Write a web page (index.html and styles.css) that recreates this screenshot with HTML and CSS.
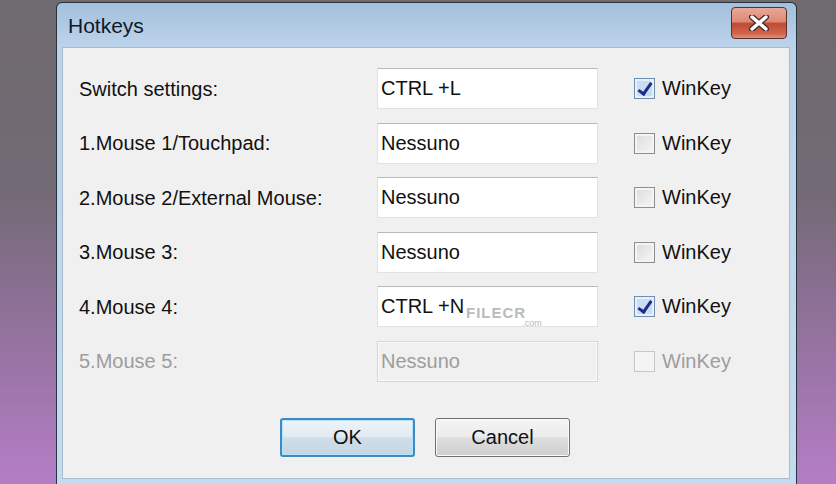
FILE: index.html
```html
<!DOCTYPE html>
<html lang="it">

<head>
    <meta charset="UTF-8">
    <title>Hotkeys</title>
    <link rel="stylesheet" href="styles.css">
</head>

<body>
    <div class="window">
        <div class="titlebar">
            <span class="title">Hotkeys</span>
            <div class="close">
                <svg width="24" height="16" viewBox="0 0 24 16">
                    <path d="M5 2 L19 14 M19 2 L5 14" stroke="#4a2a28" stroke-width="6" stroke-linecap="round"/>
                    <path d="M5 2 L19 14 M19 2 L5 14" stroke="#ffffff" stroke-width="3.4" stroke-linecap="round"/>
                </svg>
            </div>
        </div>
        <div class="content">
            <div class="rows">
                <div class="row">
                    <span class="label">Switch settings:</span>
                    <div class="field">CTRL +L</div>
                    <label class="check"><span class="box checked"></span>WinKey</label>
                </div>
                <div class="row">
                    <span class="label">1.Mouse 1/Touchpad:</span>
                    <div class="field">Nessuno</div>
                    <label class="check"><span class="box"></span>WinKey</label>
                </div>
                <div class="row">
                    <span class="label">2.Mouse 2/External Mouse:</span>
                    <div class="field">Nessuno</div>
                    <label class="check"><span class="box"></span>WinKey</label>
                </div>
                <div class="row">
                    <span class="label">3.Mouse 3:</span>
                    <div class="field">Nessuno</div>
                    <label class="check"><span class="box"></span>WinKey</label>
                </div>
                <div class="row">
                    <span class="label">4.Mouse 4:</span>
                    <div class="field">CTRL +N
                        <span class="mark">FILECR<small>.com</small></span>
                    </div>
                    <label class="check"><span class="box checked"></span>WinKey</label>
                </div>
                <div class="row disabled">
                    <span class="label">5.Mouse 5:</span>
                    <div class="field">Nessuno</div>
                    <label class="check"><span class="box"></span>WinKey</label>
                </div>
            </div>
            <div class="buttons">
                <button class="btn default">OK</button>
                <button class="btn">Cancel</button>
            </div>
        </div>
    </div>
</body>
</html>
```

FILE: styles.css
```css
body {
    margin: 0;
    height: 484px;
    overflow: hidden;
    font-family: "Liberation Sans", Arial, sans-serif;
    background: linear-gradient(to bottom, #6f6a6f 0%, #736a75 40%, #9a74a6 75%, #b47ec6 100%);
}

.window {
    margin: 2px 0 0 56px;
    width: 741px;
    height: 484px;
    box-sizing: border-box;
    border: 1px solid #26323c;
    border-bottom: none;
    border-radius: 6px 6px 0 0;
    background: linear-gradient(to bottom, #a4c0dc 0px, #bcd3ea 44px, #c4dbef 100%);
    padding: 0 6px 0 5px;
    display: flex;
    flex-direction: column;
}

.titlebar {
    height: 44px;
    display: flex;
    align-items: center;
    justify-content: space-between;
    flex-shrink: 0;
}

.title {
    font-size: 21px;
    color: #111827;
    padding-left: 6px;
    margin-top: 2px;
}

.close {
    width: 56px;
    height: 32px;
    margin-right: 3px;
    margin-top: -5px;
    box-sizing: border-box;
    border: 1px solid #5a2f2c;
    border-radius: 4px;
    background: linear-gradient(to bottom, #e9a898 0%, #dc8a76 45%, #c24a32 52%, #d0654c 85%, #e0907c 100%);
    display: flex;
    align-items: center;
    justify-content: center;
}

.content {
    flex: 1;
    margin-bottom: 7px;
    background: #f0f0f0;
    border: 1px solid #a7bccf;
    display: flex;
    flex-direction: column;
    padding: 20px 0 0 16px;
}

.rows {
    display: flex;
    flex-direction: column;
    gap: 13.6px;
}

.row {
    display: flex;
    align-items: center;
    height: 41px;
    font-size: 20px;
    color: #111;
}

.label {
    width: 298px;
    margin-top: 1px;
}

.field {
    position: relative;
    width: 221px;
    height: 41px;
    box-sizing: border-box;
    background: #fff;
    border: 1px solid #e2e2e2;
    border-top-color: #b9b9b9;
    padding: 8px 0 0 3px;
}

.row.disabled {
    color: #9d9d9d;
}

.row.disabled .field {
    background: #f0f0f0;
    border-color: #d6d6d6;
    box-shadow: inset 0 0 0 1px #fbfbfb;
}

.mark {
    position: absolute;
    left: 88px;
    top: 17px;
    font-size: 15px;
    font-weight: bold;
    color: #b9bbbd;
    letter-spacing: 1px;
}

.mark small {
    font-size: 9px;
    font-weight: normal;
    letter-spacing: 0;
    margin-left: -4px;
    vertical-align: -8px;
}

.check {
    display: flex;
    align-items: center;
    margin-left: 36px;
    gap: 7px;
}

.box {
    width: 21px;
    height: 21px;
    box-sizing: border-box;
    border: 1px solid #8f8f8f;
    background: linear-gradient(135deg, #dcdcdc, #f6f6f6);
    box-shadow: inset 0 0 0 2px #f4f4f4;
}

.box.checked {
    border-color: #6f8fae;
    background: #c9def3;
    box-shadow: inset 0 0 0 2px #e8f1fa;
    position: relative;
}

.box.checked::after {
    content: "";
    position: absolute;
    left: 6px;
    top: 1px;
    width: 5px;
    height: 12px;
    border: solid #1f2a8a;
    border-width: 0 3px 3px 0;
    transform: rotate(35deg);
}

.row.disabled .box {
    border-color: #c7c7c7;
    background: #f4f4f4;
}

.buttons {
    display: flex;
    justify-content: center;
    gap: 20px;
    margin-top: 36px;
    padding-right: 18px;
}

.btn {
    width: 135px;
    height: 39px;
    font-family: "Liberation Sans", Arial, sans-serif;
    font-size: 20px;
    color: #111;
    border: 1px solid #707070;
    border-radius: 3px;
    background: linear-gradient(to bottom, #f4f4f4 0%, #ebebeb 48%, #dddddd 52%, #cfcfcf 100%);
    box-shadow: inset 0 0 0 1px #fafafa;
}

.btn.default {
    border: 2px solid #3c8bc5;
    background: linear-gradient(to bottom, #eef4f8 0%, #e2ebf2 48%, #cfdde8 52%, #c6d6e3 100%);
    box-shadow: inset 0 0 0 1px #b8e2f8;
}
```
